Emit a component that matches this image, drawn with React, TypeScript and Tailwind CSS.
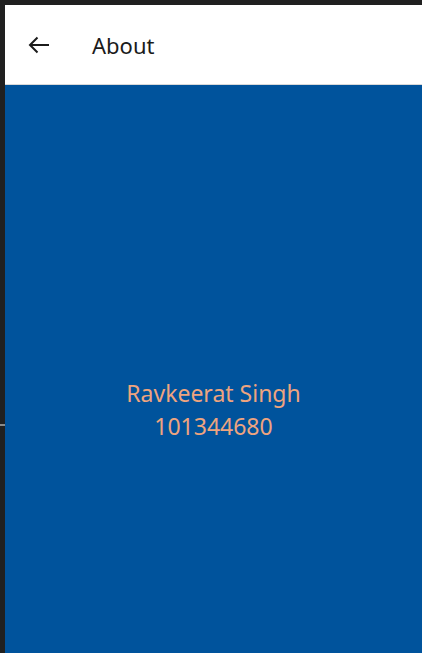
import React from "react";

export default function App() {
  return (
    <div className="w-[422px] h-[653px] bg-[#202020] flex flex-col pt-[5px] pl-[5px] overflow-hidden" style={{ fontFamily: '"Noto Sans", "Open Sans", sans-serif' }}>
      <div className="relative flex-1 flex flex-col">
        <div className="h-[80px] bg-white border-b border-[#d9d9d9] flex items-center pl-[23px] shrink-0">
          <svg width="22" height="18" viewBox="0 0 22 18" className="mt-[1px]">
            <path d="M21 9H2M9.5 1.5L2 9l7.5 7.5" fill="none" stroke="#1b1b1b" strokeWidth="2" strokeLinecap="butt" />
          </svg>
          <span className="ml-[42px] text-[22px] text-[#1b1b1b] leading-none mt-[1px]">About</span>
        </div>
        <div className="flex-1 bg-[#00539C] flex flex-col items-center pt-[292px]">
          <div className="text-[#EEA47F] text-[23px] leading-[33px] text-center">
            <div>Ravkeerat Singh</div>
            <div>101344680</div>
          </div>
        </div>
      </div>
      <div className="absolute left-0 top-[424px] w-[5px] h-[2px] bg-[#8a8a8a]" />
    </div>
  );
}
